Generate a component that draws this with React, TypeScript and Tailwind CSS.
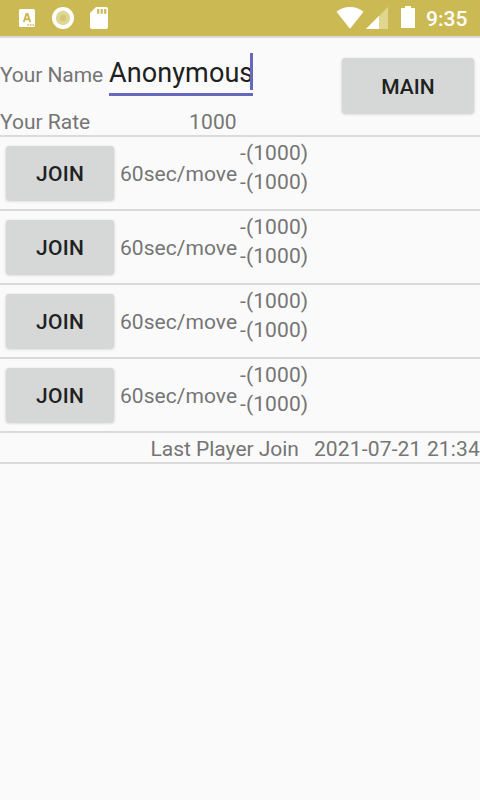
import clsx from "clsx"

const rooms = [
  { id: 1, time: "60sec/move", players: ["-(1000)", "-(1000)"] },
  { id: 2, time: "60sec/move", players: ["-(1000)", "-(1000)"] },
  { id: 3, time: "60sec/move", players: ["-(1000)", "-(1000)"] },
  { id: 4, time: "60sec/move", players: ["-(1000)", "-(1000)"] },
]

function GrayButton({ label, className }: { label: string; className?: string }) {
  return (
    <button
      className={clsx(
        "shrink-0 rounded-[3px] bg-[#d6d8d7] text-[21px] leading-none font-medium text-[#202121] shadow-[0_1px_3px_rgba(0,0,0,0.22)]",
        className,
      )}
    >
      {label}
    </button>
  )
}

function StatusBar() {
  return (
    <div className="flex h-9 justify-between bg-[#cbba53]">
      <svg width="120" height="36" viewBox="0 0 120 36">
        {/* Keyboard */}
        <rect x="19" y="9" width="16" height="18" rx="1.5" fill="#fff" />
        <path d="M23.8 22 26.4 14h1.2l2.6 8M24.8 19.3h4.4" fill="none" stroke="#cbba53" strokeWidth="2" />
        <path d="M27.3 25h1.6M29.9 25h1.6M32.5 25h1.6" stroke="#cbba53" strokeWidth="1.4" />
        {/* Record */}
        <circle cx="63" cy="18" r="11" fill="#fff" />
        <circle cx="63" cy="18" r="7.2" fill="#e0d696" />
        <circle cx="63" cy="18" r="3.2" fill="#d5c873" />
        {/* SD card */}
        <path d="M96 7h10a2 2 0 0 1 2 2v18a2 2 0 0 1-2 2H92a2 2 0 0 1-2-2V13z" fill="#fff" />
        <path d="M98.2 9v4.8M101.7 9v4.8M105.2 9v4.8" stroke="#cbba53" strokeWidth="2.2" />
      </svg>
      <div className="flex">
        <svg width="90" height="36" viewBox="330 0 90 36">
          {/* Wifi */}
          <path d="M336.5 11.8Q342 7 350 7t13.5 4.8L350 28.8z" fill="#fff" />
          {/* Signal */}
          <path d="M366 29 388 7v22z" fill="#e0d68f" />
          <path d="M366 29 379 16v13z" fill="#fff" />
          {/* Battery */}
          <path d="M401 8h4V6h6v2h4v20h-14z" fill="#fff" />
        </svg>
        <span className="w-[60px] pl-[6px] text-[21px] leading-[39px] font-medium text-white">9:35</span>
      </div>
    </div>
  )
}

export default function App() {
  return (
    <div className="h-[800px] w-[480px] overflow-hidden bg-[#fafafa] font-['Roboto',sans-serif] text-[21px] leading-[29px] text-[#757575]">
      <StatusBar />

      <div className="flex h-[101px] justify-between border-y-2 border-[#dadada]">
        <div className="w-[256px]">
          <div className="flex h-[70px] items-start">
            <span className="w-[109px] pt-[23px] tracking-[-0.08px] whitespace-nowrap">Your Name</span>
            <div className="mt-[15px] flex h-[43px] w-[144px] border-b-3 border-[#6668bc] text-[27px] leading-10 text-[#202020]">
              <span className="w-[141px] tracking-[0.1px] whitespace-nowrap">Anonymous</span>
              <span className="h-[37px] w-[3px] shrink-0 bg-[#6668bc]" />
            </div>
          </div>
          <div className="flex">
            <span className="w-[189px]">Your Rate</span>
            <span className="tracking-[0.15px]">1000</span>
          </div>
        </div>
        <GrayButton label="MAIN" className="mt-5 mr-[6px] h-[55px] w-[132px] pt-[3px] tracking-[0.1px]" />
      </div>

      {rooms.map((room) => (
        <div key={room.id} className="flex h-[74px] border-b-2 border-[#dadada]">
          <GrayButton label="JOIN" className="mt-[9px] ml-[6px] h-[54px] w-[108px] pt-[2px] tracking-[0.3px]" />
          <span className="ml-[6px] w-[120px] pt-[23px] tracking-[0.05px] whitespace-nowrap">{room.time}</span>
          <div className="pt-[2px] tracking-[0.1px]">
            {room.players.map((player, i) => (
              <div key={i}>{player}</div>
            ))}
          </div>
        </div>
      ))}

      <div className="flex h-[31px] justify-end gap-[15px] border-b-2 border-[#dadada] pt-[2px] whitespace-nowrap">
        <span className="tracking-[-0.03px]">Last Player Join</span>
        <span className="tracking-[0.16px]">2021-07-21 21:34</span>
      </div>
    </div>
  )
}
